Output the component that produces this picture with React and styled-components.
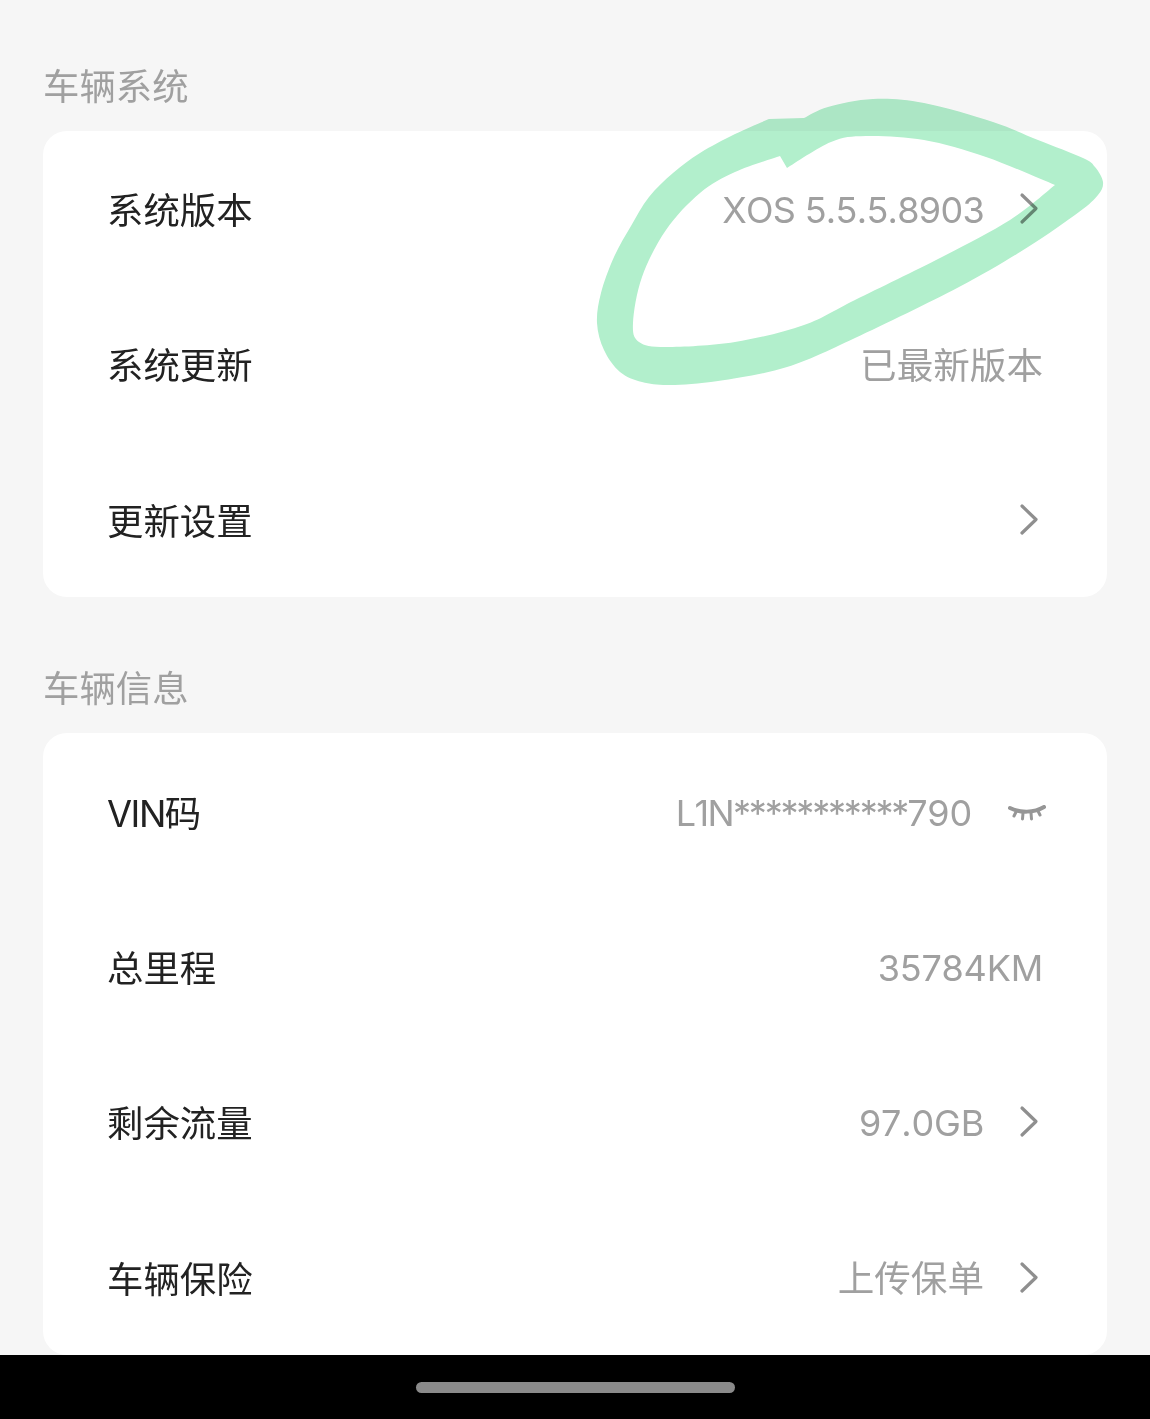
import React from 'react';
import styled, { createGlobalStyle } from 'styled-components';

const GlobalStyle = createGlobalStyle`
  html, body {
    margin: 0;
    padding: 0;
    background: #f6f6f6;
  }
`;

const sections = [
  {
    title: '车辆系统',
    rows: [
      { label: '系统版本', value: 'XOS 5.5.5.8903', latin: true, narrow: true, icon: 'chevron' },
      { label: '系统更新', value: '已最新版本' },
      { label: '更新设置', icon: 'chevron' },
    ],
  },
  {
    title: '车辆信息',
    rows: [
      { label: 'VIN码', tight: true, masked: ['L1N', '***********', '790'], latin: true, icon: 'eye' },
      { label: '总里程', value: '35784KM', latin: true },
      { label: '剩余流量', value: '97.0GB', latin: true, icon: 'chevron' },
      { label: '车辆保险', value: '上传保单', icon: 'chevron' },
    ],
  },
];

const outerEdge = [
  [804, 118], [828, 107], [873, 99], [924, 103], [993, 122], [1038, 140], [1083, 158], [1095, 167], [1103, 182],
  [1098, 195], [1079, 212], [1028, 247], [959, 287], [855, 338], [787, 367], [718, 381], [670, 385],
  [642, 382], [620, 372], [604, 350], [597, 323], [601, 293], [614, 257], [631, 226], [649, 197], [673, 173], [700, 153], [735, 134], [769, 119],
];

const innerTop = [
  [787, 168], [831, 142], [866, 136], [924, 140], [986, 157], [1055, 185],
];

const innerBottom = [
  [1055, 185], [1010, 220], [942, 257], [855, 300], [804, 325], [735, 342], [666, 347], [639, 342],
  [633, 323], [642, 277], [666, 230], [700, 193], [735, 172], [780, 156],
];

// catmull-rom through the traced points
const smooth = points =>
  points
    .slice(0, -1)
    .map((p, i) => {
      const prev = points[i - 1] || p;
      const next = points[i + 1];
      const after = points[i + 2] || next;
      const c1 = [p[0] + (next[0] - prev[0]) / 6, p[1] + (next[1] - prev[1]) / 6];
      const c2 = [next[0] - (after[0] - p[0]) / 6, next[1] - (after[1] - p[1]) / 6];
      return `C${c1[0]} ${c1[1]} ${c2[0]} ${c2[1]} ${next[0]} ${next[1]}`;
    })
    .join(' ');

const scribblePath = `M804 118 ${smooth(outerEdge)} Z M787 168 ${smooth(innerTop)} ${smooth(innerBottom)} Z`;

const Chevron = () => (
  <ChevronSvg viewBox="0 0 24 34" aria-hidden="true">
    <path d="M3 3 L17 16.5 L3 30" fill="none" stroke="#8f8f8f" strokeWidth="3.2" strokeLinecap="round" strokeLinejoin="round" />
  </ChevronSvg>
);

const ClosedEye = () => (
  <EyeSvg viewBox="0 0 38 18" aria-hidden="true">
    <g fill="none" stroke="#969696" strokeLinecap="round">
      <path d="M2 3 C12 8 26 8 36 2" strokeWidth="4" />
      <path d="M8 7 L6 11 M15 8 L14.5 14 M23 8 L23.5 14 M30 6 L32 10" strokeWidth="3" />
    </g>
  </EyeSvg>
);

export default function App() {
  return (
    <Screen>
      <GlobalStyle />
      <Content>
        {sections.map(section => (
          <Section key={section.title}>
            <SectionTitle>{section.title}</SectionTitle>
            <Card>
              {section.rows.map(row => (
                <Row key={row.label}>
                  <Label $tight={row.tight}>{row.label}</Label>
                  <Trailing>
                    {row.value && (
                      <Value $latin={row.latin} $narrow={row.narrow}>
                        {row.value}
                      </Value>
                    )}
                    {row.masked && (
                      <Value $latin>
                        <Prefix>{row.masked[0]}</Prefix>
                        <Stars>{row.masked[1]}</Stars>
                        {row.masked[2]}
                      </Value>
                    )}
                    {row.icon === 'chevron' && <Chevron />}
                    {row.icon === 'eye' && <ClosedEye />}
                  </Trailing>
                </Row>
              ))}
            </Card>
          </Section>
        ))}
        <Scribble viewBox="0 0 1150 1419" aria-hidden="true">
          <path d={scribblePath} fill="#b2efcc" fillRule="evenodd" />
        </Scribble>
      </Content>
      <NavBar>
        <HomeIndicator />
      </NavBar>
    </Screen>
  );
}

const Screen = styled.div`
  width: 1150px;
  height: 1419px;
  display: flex;
  flex-direction: column;
  overflow: hidden;
  background: #f6f6f6;
  font-family: Inter, 'Noto Sans CJK SC', sans-serif;
`;

const Content = styled.div`
  position: relative;
  flex: 1;
  min-height: 0;
  overflow: hidden;
  padding: 59.5px 43px 0;
  display: flex;
  flex-direction: column;
  gap: 65px;
`;

const Section = styled.section`
  display: flex;
  flex-direction: column;
  gap: 23.5px;
`;

const SectionTitle = styled.h2`
  margin: 0;
  height: 48px;
  line-height: 48px;
  font-size: 36.4px;
  font-weight: 400;
  color: #a0a0a0;
  font-family: 'Noto Sans CJK SC', sans-serif;
`;

const Card = styled.div`
  flex-shrink: 0;
  background: #ffffff;
  border-radius: 24px;
  display: flex;
  flex-direction: column;
`;

const Row = styled.div`
  height: 155.33px;
  padding: 0 64px 1px 64px;
  box-sizing: border-box;
  display: flex;
  align-items: center;
  justify-content: space-between;
`;

const Label = styled.span`
  font-size: 36.4px;
  color: #222222;
  letter-spacing: ${props => (props.$tight ? '-1.5px' : '0')};
`;

const Trailing = styled.div`
  display: flex;
  align-items: center;
  gap: 35px;
`;

const Value = styled.span`
  font-size: ${props => (props.$latin ? '36px' : '36.6px')};
  padding-top: ${props => (props.$latin ? '4px' : '0')};
  font-kerning: ${props => (props.$latin ? 'none' : 'auto')};
  letter-spacing: ${props => (props.$narrow ? '-0.7px' : props.$latin ? '-0.2px' : '0')};
  color: #a0a0a0;
`;

const Prefix = styled.span`
  letter-spacing: -1.6px;
`;

const Stars = styled.span`
  letter-spacing: -2.2px;
`;

const ChevronSvg = styled.svg`
  width: 24px;
  height: 34px;
  margin-top: 2px;
`;

const EyeSvg = styled.svg`
  width: 38px;
  height: 18px;
  margin: 6px -3px 0 1px;
`;

const Scribble = styled.svg`
  position: absolute;
  top: 0;
  left: 0;
  width: 1150px;
  height: 1419px;
  mix-blend-mode: multiply;
  pointer-events: none;
`;

const NavBar = styled.div`
  flex: 0 0 64px;
  background: #000000;
  display: flex;
  justify-content: center;
  padding-top: 27px;
  box-sizing: border-box;
`;

const HomeIndicator = styled.div`
  width: 319px;
  height: 11px;
  border-radius: 6px;
  background: #8a8a8a;
`;
